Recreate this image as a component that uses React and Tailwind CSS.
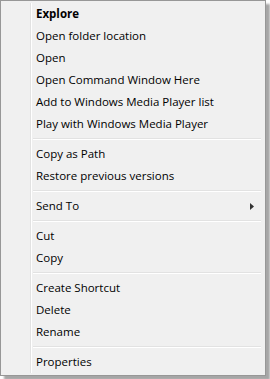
import React from 'react';

const groups = [
  [
    { label: 'Explore', bold: true },
    { label: 'Open folder location' },
    { label: 'Open' },
    { label: 'Open Command Window Here' },
    { label: 'Add to Windows Media Player list' },
    { label: 'Play with Windows Media Player' },
  ],
  [{ label: 'Copy as Path' }, { label: 'Restore previous versions' }],
  [{ label: 'Send To', submenu: true }],
  [{ label: 'Cut' }, { label: 'Copy' }],
  [{ label: 'Create Shortcut' }, { label: 'Delete' }, { label: 'Rename' }],
  [{ label: 'Properties' }],
];

const Gutter = () => (
  <div className="w-[28px] shrink-0 self-stretch border-r border-r-[#e2e2e2]" />
);

const Item = ({ label, bold, submenu }) => (
  <div className="flex h-[22px] items-stretch">
    <Gutter />
    <div className="flex flex-1 items-center border-l border-l-white pl-[4px] pr-[9px]">
      <span className={`flex-1 text-[11.5px] leading-none text-black ${bold ? 'font-bold' : ''}`}>
        {label}
      </span>
      {submenu && (
        <svg width="4" height="7" viewBox="0 0 4 7" className="shrink-0">
          <path d="M0 0 L4 3.5 L0 7 Z" fill="#333" />
        </svg>
      )}
    </div>
  </div>
);

const Separator = () => (
  <div className="flex h-[8px] items-stretch">
    <Gutter />
    <div className="flex flex-1 items-center border-l border-l-white pl-[1px] pr-[2px]">
      <div className="h-[2px] flex-1 border-t border-t-[#e2e2e2] border-b border-b-white" />
    </div>
  </div>
);

export default function App() {
  return (
    <div className="w-[270px] h-[379px] bg-white" style={{ fontFamily: '"Open Sans", "Noto Sans", sans-serif' }}>
      <div className="w-[266px] border border-[#979797] bg-[#f0f0f0] p-[2px] shadow-[4px_4px_2px_rgba(0,0,0,0.35)]">
        {groups.map((group, i) => (
          <React.Fragment key={i}>
            {i > 0 && <Separator />}
            {group.map((item) => (
              <Item key={item.label} {...item} />
            ))}
          </React.Fragment>
        ))}
      </div>
    </div>
  );
}
